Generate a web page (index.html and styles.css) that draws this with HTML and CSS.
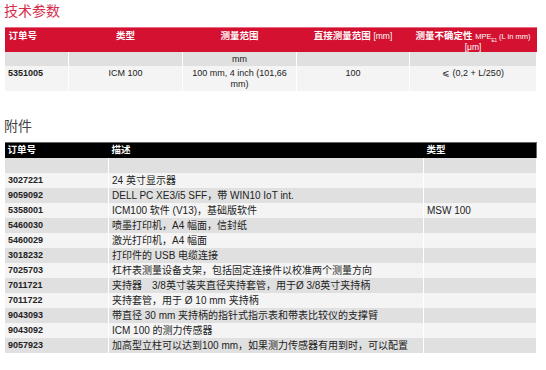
FILE: index.html
```html
<!DOCTYPE html>
<html lang="zh">
<head>
  <meta charset="UTF-8">
  <title>技术参数</title>
  <link rel="stylesheet" href="styles.css">
</head>
<body>

  <h2 class="section-title red-title">技术参数</h2>
  <table class="spec-table">
    <colgroup>
      <col style="width: 64px">
      <col style="width: 114px">
      <col style="width: 114px">
      <col style="width: 113px">
      <col style="width: 127px">
    </colgroup>
    <thead>
      <tr>
        <th class="left">订单号</th>
        <th>类型</th>
        <th>测量范围</th>
        <th>直接测量范围 <span class="thin">[mm]</span></th>
        <th class="tight">测量不确定性 <span class="thin small">MPE<sub>E1</sub> (L in mm)</span><br><span class="thin">[μm]</span></th>
      </tr>
    </thead>
    <tbody>
      <tr class="unit-row">
        <td></td>
        <td></td>
        <td>mm</td>
        <td></td>
        <td></td>
      </tr>
      <tr class="data-row">
        <td class="left num">5351005</td>
        <td>ICM 100</td>
        <td>100 mm, 4 inch (101,66 mm)</td>
        <td>100</td>
        <td>⩽ (0,2 + L/250)</td>
      </tr>
    </tbody>
  </table>

  <h2 class="section-title">附件</h2>
  <table class="acc-table">
    <colgroup>
      <col style="width: 104px">
      <col style="width: 315px">
      <col style="width: 113px">
    </colgroup>
    <thead>
      <tr>
        <th>订单号</th>
        <th>描述</th>
        <th>类型</th>
      </tr>
    </thead>
    <tbody>
      <tr><td></td><td></td><td></td></tr>
      <tr><td class="num">3027221</td><td>24 英寸显示器</td><td></td></tr>
      <tr><td class="num">9059092</td><td>DELL PC XE3/i5 SFF，带 WIN10 IoT int.</td><td></td></tr>
      <tr><td class="num">5358001</td><td>ICM100 软件 (V13)，基础版软件</td><td>MSW 100</td></tr>
      <tr><td class="num">5460030</td><td>喷墨打印机，A4 幅面，信封纸</td><td></td></tr>
      <tr><td class="num">5460029</td><td>激光打印机，A4 幅面</td><td></td></tr>
      <tr><td class="num">3018232</td><td>打印件的 USB 电缆连接</td><td></td></tr>
      <tr><td class="num">7025703</td><td>杠杆表测量设备支架，包括固定连接件以校准两个测量方向</td><td></td></tr>
      <tr><td class="num">7011721</td><td>夹持器　3/8英寸装夹直径夹持套管，用于Ø 3/8英寸夹持柄</td><td></td></tr>
      <tr><td class="num">7011722</td><td>夹持套管，用于 Ø 10 mm 夹持柄</td><td></td></tr>
      <tr><td class="num">9043093</td><td>带直径 30 mm 夹持柄的指针式指示表和带表比较仪的支撑臂</td><td></td></tr>
      <tr><td class="num">9043092</td><td>ICM 100 的测力传感器</td><td></td></tr>
      <tr><td class="num">9057923</td><td>加高型立柱可以达到100 mm，如果测力传感器有用到时，可以配置</td><td></td></tr>
    </tbody>
  </table>

</body>
</html>
```

FILE: styles.css
```css
body {
  margin: 0;
  padding: 0 4px;
  font-family: "Liberation Sans", "Noto Sans CJK SC", sans-serif;
  color: #222;
  background: white;
}
.section-title {
  margin: 0 0 5px 0;
  font-size: 14px;
  line-height: 22px;
  font-weight: normal;
  color: #444;
}
.red-title {
  color: #d42e4c;
}
table {
  border-collapse: collapse;
  table-layout: fixed;
  width: 532px;
  font-size: 9px;
}
th {
  color: white;
  font-weight: bold;
  font-size: 9.5px;
  vertical-align: top;
}
td {
  border-left: 1px solid white;
  border-right: 1px solid white;
}
.num {
  font-weight: bold;
  font-size: 9px;
}
.left {
  text-align: left;
}

/* spec table */
.spec-table thead tr {
  background: #d41131;
  border-top: 1px solid #e66a80;
}
.spec-table th {
  height: 24px;
  padding: 3px 4px 0;
  line-height: 10px;
  box-sizing: border-box;
  text-align: center;
}
.spec-table th.left {
  text-align: left;
}
.spec-table th.tight {
  padding: 3px 0 0;
  white-space: nowrap;
}
.spec-table .thin {
  font-weight: normal;
  font-size: 8.5px;
}
.spec-table .small {
  font-size: 7.5px;
}
.spec-table sub {
  font-size: 4.5px;
  line-height: 0;
}
.spec-table td {
  text-align: center;
  padding: 0 3px;
}
.spec-table td.left {
  text-align: left;
}
.unit-row td {
  background: #e0e0e0;
  height: 14px;
  line-height: 14px;
  padding: 0;
}
.data-row td {
  background: #f4f4f4;
  height: 25px;
  line-height: 11px;
  vertical-align: top;
  padding-top: 2px;
  box-sizing: border-box;
}

/* accessories table */
.spec-table + .section-title {
  margin-top: 24px;
}
.acc-table thead tr {
  background: black;
  border-top: 1px solid #666;
  border-right: 1px solid #666;
}
.acc-table th {
  text-align: left;
  height: 15px;
  line-height: 13px;
  padding: 0 3px;
  box-sizing: border-box;
}
.acc-table td {
  height: 15px;
  line-height: 15px;
  padding: 0 3px;
  font-size: 10px;
  white-space: nowrap;
  overflow: hidden;
}
.acc-table td.num {
  font-size: 9px;
}
.acc-table tbody tr:nth-child(odd) td {
  background: #e0e0e0;
}
.acc-table tbody tr:nth-child(even) td {
  background: #f4f4f4;
}
```
